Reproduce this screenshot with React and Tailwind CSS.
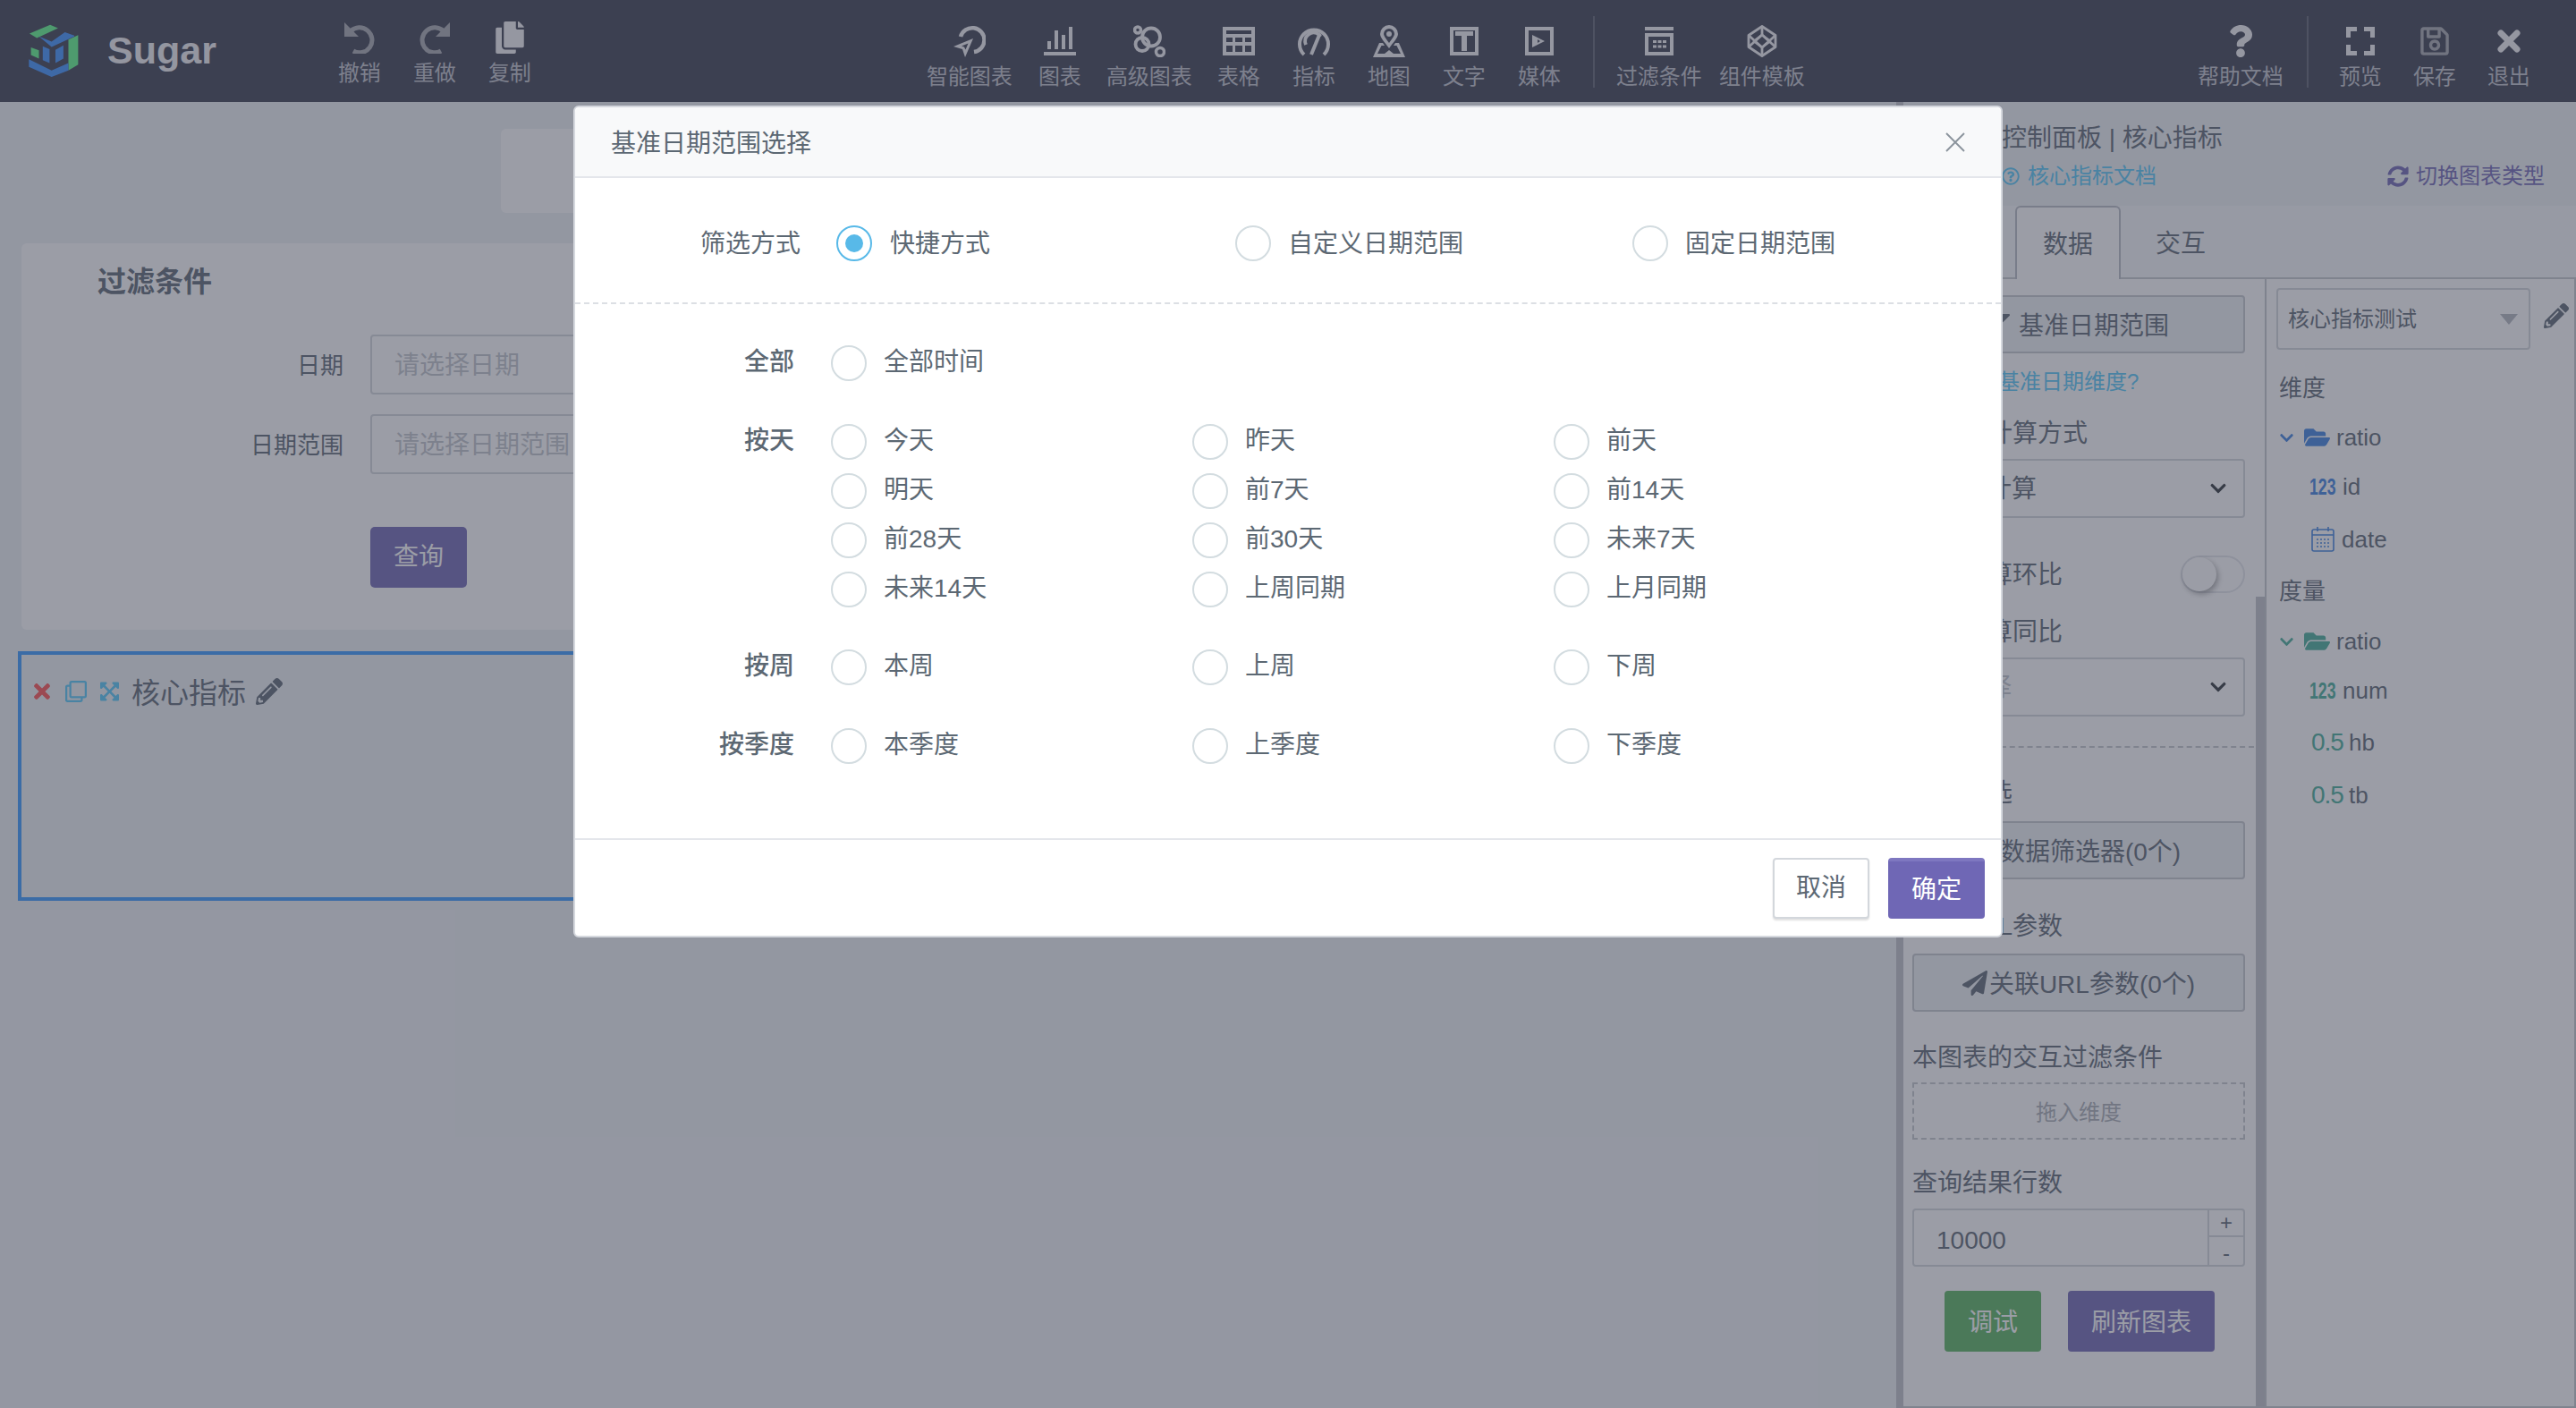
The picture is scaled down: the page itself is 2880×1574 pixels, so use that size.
import React from 'react';
import {
  FaChevronDown,
  FaCopy,
  FaExpandArrowsAlt,
  FaFilter,
  FaFolderOpen,
  FaPaperPlane,
  FaPencilAlt,
  FaQuestion,
  FaRegClone,
  FaRegQuestionCircle,
  FaRegSave,
  FaSyncAlt,
  FaTimes,
} from 'react-icons/fa';

const Svg = ({ children, className = '' }) => (
  <svg viewBox="0 0 36 36" className={`w-[36px] h-[36px] ${className}`} fill="currentColor">
    {children}
  </svg>
);

const UndoIcon = ({ className = '' }) => (
  <Svg className={className}>
    <path d="M1 1v16h16z" />
    <path d="M8 11a14 14 0 1 1 3 22" fill="none" stroke="currentColor" strokeWidth="5" />
  </Svg>
);

const SmartIcon = () => (
  <Svg>
    <path d="M8 13a13.5 13.500 0 1 1 15 17" fill="none" stroke="currentColor" strokeWidth="4.500" />
    <path d="M0 24l22-9-9 21-3-9zM9 23.500l3 1 1.500 3 3-7z" fillRule="evenodd" />
  </Svg>
);

const BarsIcon = () => (
  <Svg>
    <path d="M4 18h4v9H4zM12 6h4v21h-4zM20 11h4v16h-4zM28 2h4v25h-4zM0 30h36v4H0z" />
  </Svg>
);

const BubbleIcon = () => (
  <Svg>
    <g fill="none" stroke="currentColor">
      <circle cx="5" cy="5.500" r="3.500" strokeWidth="3.500" />
      <circle cx="20" cy="13.500" r="10" strokeWidth="3.800" />
      <circle cx="10" cy="21.500" r="7.500" strokeWidth="3.800" />
      <circle cx="30" cy="30" r="4.500" strokeWidth="3.500" />
    </g>
  </Svg>
);

const TableIcon = () => (
  <Svg>
    <path
      fillRule="evenodd"
      d="M0 2h36v32H0zM4 6v4h28V6zM4 14v5h7v-5zM14 14v5h8v-5zM25 14v5h7v-5zM4 23v7h7v-7zM14 23v7h8v-7zM25 23v7h7v-7z"
    />
  </Svg>
);

const GaugeIcon = () => (
  <Svg>
    <g fill="none" stroke="currentColor" strokeWidth="4">
      <path d="M7 33a16 16 0 1 1 22 0" />
      <path d="M9 22a9.500 9.500 0 0 1 15-11l-9 22" />
      <path d="M24 11l1 2" />
    </g>
  </Svg>
);

const MapIcon = () => (
  <Svg>
    <path
      fillRule="evenodd"
      d="M18 0a10 10 0 0 1 10 10c0 4-5 9-10 16C13 19 8 14 8 10A10 10 0 0 1 18 0zm0 4a6 6 0 0 0-6 6c0 2 3 6 6 10 3-4 6-8 6-10a6 6 0 0 0-6-6zm0 3a3 3 0 1 1 0 6 3 3 0 0 1 0-6z"
    />
    <path d="M7 20h4l2 3H9.500L5 32h8l5-4 5 4h8l-4.500-9H23l2-3h4l7 16H0z" />
  </Svg>
);

const TextIcon = () => (
  <Svg>
    <path fillRule="evenodd" d="M2 2h32v32H2zM6 6v24h24V6z" />
    <path d="M8 7h20v5h-7v17h-6V12H8z" />
  </Svg>
);

const MediaIcon = () => (
  <Svg>
    <path fillRule="evenodd" d="M2 2h32v32H2zM6 6v24h24V6z" />
    <path fillRule="evenodd" d="M10 11l14 7-14 7zM16 16v4l3-2z" />
  </Svg>
);

const FilterBoxIcon = () => (
  <Svg>
    <path d="M2 2h32v4H2z" />
    <path fillRule="evenodd" d="M2 9h32v25H2zM6 13v17h24V13z" />
    <path d="M11 17h4v3h-4zM16.500 17h4v3h-4zM22 17h4v3h-4zM11 22.500h4v3h-4zM16.500 22.500h4v3h-4zM22 22.500h4v3h-4z" />
  </Svg>
);

const TemplateIcon = () => (
  <Svg>
    <g fill="none" stroke="currentColor" strokeWidth="2.800" strokeLinejoin="round">
      <path d="M18 1.500l15 10v13l-15 10-15-10v-13z" />
      <path d="M18 11l9 7-9 7-9-7z" />
      <path d="M18 1.500V11M18 25v9.500M3 11.500l15 13.500 15-13.500M3 24.500l15-13.500 15 13.500" />
    </g>
  </Svg>
);

const PreviewIcon = () => (
  <Svg>
    <path d="M2 2h12v5H7v7H2zM22 2h12v12h-5V7h-7zM2 22h5v7h7v5H2zM29 22h5v12H22v-5h7z" />
  </Svg>
);

const CloseIcon = () => (
  <Svg>
    <path d="M9 9l18 18M27 9L9 27" fill="none" stroke="currentColor" strokeWidth="7" strokeLinecap="round" />
  </Svg>
);

const CalendarIcon = ({ className = '' }) => (
  <svg viewBox="0 0 26 28" className={`w-[26px] h-[28px] ${className}`} fill="none" stroke="currentColor" strokeWidth="1.600">
    <rect x="1" y="3" width="24" height="24" rx="2" />
    <path d="M1 9h24M7 0v5M19 0v5" />
    <path d="M6 14h14M6 18h14M6 22h14" strokeDasharray="2 2" />
  </svg>
);

const SugarLogo = () => (
  <svg viewBox="38 33 168 182" className="w-[56px] h-[60px] shrink-0">
    <path fill="#5ff88b" d="M40 65l70-30 27 12-72 33zM172 85l33-15v100l-33 20zM45 112l27 10v28l-27-12z" />
    <path
      fill="#3e92ff"
      d="M72 75l43 17 45-32 32 12v3l-77 35zM38 152l77 38 57-25v25l-57 22-77-34zM85 108l23 10v47l-23-10zM128 120l27-15v45l-27 15z"
    />
  </svg>
);

const Tool = ({ label, icon, className = '', gap = 'mt-[10px]', tone = 'text-[#f2f2f5]' }) => (
  <div className={`flex flex-col items-center ${className}`}>
    <div className={`h-[36px] flex items-center justify-center ${tone}`}>{icon}</div>
    <span className={`${gap} text-[24px] leading-[24px] text-[#c0c2ca] whitespace-nowrap`}>{label}</span>
  </div>
);

const CHART_TOOLS = [
  { label: '智能图表', icon: <SmartIcon />, ml: '' },
  { label: '图表', icon: <BarsIcon />, ml: 'ml-[29px]' },
  { label: '高级图表', icon: <BubbleIcon />, ml: 'ml-[28px]' },
  { label: '表格', icon: <TableIcon />, ml: 'ml-[28px]' },
  { label: '指标', icon: <GaugeIcon />, ml: 'ml-[36px]' },
  { label: '地图', icon: <MapIcon />, ml: 'ml-[36px]' },
  { label: '文字', icon: <TextIcon />, ml: 'ml-[36px]' },
  { label: '媒体', icon: <MediaIcon />, ml: 'ml-[36px]' },
];

const Header = () => (
  <header className="h-[114px] shrink-0 bg-[#3a3d4f] flex items-start pl-[32px]">
    <div className="mt-[27px]">
      <SugarLogo />
    </div>
    <span className="ml-[32px] mt-[35px] text-[43px] leading-[42px] font-bold text-[#f0f0f3]">Sugar</span>

    <div className="ml-[136px] mt-[24px] flex items-start">
      <Tool label="撤销" tone="text-[#a8aab0]" icon={<UndoIcon />} />
      <Tool
        label="重做"
        tone="text-[#a8aab0]"
        className="ml-[36px]"
        icon={<UndoIcon className="-scale-x-100" />}
      />
      <Tool label="复制" className="ml-[36px]" icon={<FaCopy className="w-[32px] h-[36px]" />} />
    </div>

    <div className="ml-[442px] mt-[28px] flex items-start">
      {CHART_TOOLS.map((t) => (
        <Tool key={t.label} label={t.label} icon={t.icon} className={t.ml} />
      ))}
      <div className="ml-[36px] -mt-[10px] w-[2px] h-[80px] bg-[#5f6272]" />
      <Tool label="过滤条件" icon={<FilterBoxIcon />} className="ml-[24px]" />
      <Tool label="组件模板" icon={<TemplateIcon />} className="ml-[19px]" />
    </div>

    <div className="ml-[439px] mt-[28px] flex items-start">
      <Tool label="帮助文档" icon={<FaQuestion className="w-[28px] h-[36px]" />} />
      <div className="ml-[26px] -mt-[10px] w-[2px] h-[80px] bg-[#5f6272]" />
      <Tool label="预览" icon={<PreviewIcon />} className="ml-[34px]" />
      <Tool
        label="保存"
        tone="text-[#a8aab0]"
        icon={<FaRegSave className="w-[32px] h-[36px]" />}
        className="ml-[35px]"
      />
      <Tool label="退出" icon={<CloseIcon />} className="ml-[35px]" />
    </div>
  </header>
);

const FormRow = ({ label, placeholder, className = '' }) => (
  <div className={`flex items-center ${className}`}>
    <label className="w-[360px] pt-[2px] text-right text-[26px] leading-[28px] text-[#5c6873]">{label}</label>
    <input
      readOnly
      placeholder={placeholder}
      className="ml-[30px] w-[460px] h-[67px] pl-[25px] pr-[10px] pt-[3px] bg-white rounded-[4px] border-2 border-[#d4d7db] text-[28px] placeholder:text-[#c0c4ca]"
    />
  </div>
);

const Canvas = () => (
  <main className="w-[2120px] shrink-0 flex flex-col pt-[30px]">
    <div className="ml-[560px] w-[1200px] h-[94px] bg-white rounded-[6px]" />

    <section className="ml-[24px] mt-[34px] w-[2072px] h-[432px] bg-white rounded-[6px]">
      <h2 className="pl-[85px] pt-[27px] text-[32px] leading-[32px] font-bold text-[#5c6873]">过滤条件</h2>
      <FormRow label="日期" placeholder="请选择日期" className="mt-[43px]" />
      <FormRow label="日期范围" placeholder="请选择日期范围" className="mt-[22px]" />
      <button className="block ml-[390px] mt-[59px] w-[108px] h-[68px] rounded-[5px] bg-[#6f67b5] text-white text-[28px]">
        查询
      </button>
    </section>

    <section className="ml-[20px] mt-[24px] w-[2080px] h-[279px] border-4 border-[#3898ff] pl-[12px] pt-[20px]">
      <div className="flex items-center h-[42px]">
        <FaTimes className="w-[22px] h-[26px] text-[#ff5050]" />
        <FaRegClone className="ml-[15px] w-[24px] h-[24px] text-[#55c8f8]" />
        <FaExpandArrowsAlt className="ml-[15px] w-[21px] h-[24px] text-[#55c8f8]" />
        <span className="ml-[14px] pt-[3px] text-[32px] leading-[42px] text-[#5c6873]">核心指标</span>
        <FaPencilAlt className="ml-[11px] w-[30px] h-[30px] text-[#5c6873]" />
      </div>
    </section>
  </main>
);

const FieldLabel = ({ children, className = '' }) => (
  <div className={`h-[28px] pt-[2px] text-[28px] leading-[28px] text-[#5c6873] whitespace-nowrap ${className}`}>
    {children}
  </div>
);

const GrayButton = ({ icon, children, className = '' }) => (
  <div
    className={`h-[65px] flex items-center justify-center gap-[2px] bg-[#eff2f5] border-2 border-[#c4c8ce] rounded-[4px] text-[28px] text-[#5c6873] ${className}`}
  >
    {icon}
    <span className="pt-[5px]">{children}</span>
  </div>
);

const SelectBox = ({ children, muted, className = 'mt-[14px]' }) => (
  <div className={`h-[66px] flex items-center justify-between pl-[25px] pr-[18px] border-2 border-[#d4d7db] rounded-[4px] ${className}`}>
    <span className={`pt-[2px] text-[28px] leading-[28px] ${muted ? 'text-[#c0c4ca]' : 'text-[#5c6873]'}`}>{children}</span>
    <FaChevronDown className="w-[20px] h-[20px] text-[#2f353a]" />
  </div>
);

const QueryPanel = () => (
  <div className="relative w-[406px] shrink-0 bg-white border-r-2 border-[#c4c8ce] pl-[10px] pr-[22px] flex flex-col">
    <div className="absolute right-0 top-[355px] bottom-0 w-[10px] bg-[#c0c3c9]" />
    <GrayButton className="mt-[18px] gap-[10px]" icon={<FaFilter className="w-[24px] h-[24px]" />}>
      基准日期范围
    </GrayButton>
    <div className="mt-[20px] pl-[24px] h-[24px] text-[24px] leading-[24px] text-[#55c8f8]">什么是基准日期维度?</div>
    <FieldLabel className="mt-[30px]">同环比计算方式</FieldLabel>
    <SelectBox className="mt-[16px]">正常计算</SelectBox>
    <div className="mt-[42px] h-[42px] flex items-center justify-between">
      <FieldLabel className="-mt-[2px]">是否计算环比</FieldLabel>
      <div className="w-[72px] h-[42px] rounded-full border-2 border-[#e4e6eb] bg-white">
        <div className="w-[38px] h-[38px] rounded-full bg-white shadow-[2px_3px_6px_rgba(0,0,0,0.35)]" />
      </div>
    </div>
    <FieldLabel className="mt-[28px]">是否计算同比</FieldLabel>
    <SelectBox muted className="mt-[16px]">
      请选择
    </SelectBox>
    <div className="mt-[33px] -ml-[10px] mr-[-10px] border-t-2 border-dashed border-[#c4c8ce]" />
    <FieldLabel className="mt-[35px]">数据筛选</FieldLabel>
    <GrayButton className="mt-[19px]" icon={<FaFilter className="w-[24px] h-[24px]" />}>
      数据筛选器(0个)
    </GrayButton>
    <FieldLabel className="mt-[37px]">关联URL参数</FieldLabel>
    <GrayButton className="mt-[18px] h-[64px]" icon={<FaPaperPlane className="w-[28px] h-[28px]" />}>
      关联URL参数(0个)
    </GrayButton>
    <FieldLabel className="mt-[36px]">本图表的交互过滤条件</FieldLabel>
    <div className="mt-[15px] h-[64px] pt-[4px] flex items-center justify-center border-2 border-dashed border-[#c4c8ce] text-[24px] text-[#a9aeb5]">
      拖入维度
    </div>
    <FieldLabel className="mt-[33px]">查询结果行数</FieldLabel>
    <div className="mt-[16px] h-[65px] flex border-2 border-[#d4d7db] rounded-[4px]">
      <div className="flex-1 flex items-center pl-[25px] pt-[6px] text-[28px] text-[#5c6873]">10000</div>
      <div className="w-[40px] border-l-2 border-[#d4d7db] flex flex-col text-[#5c6873] text-[24px]">
        <span className="h-[30px] flex items-center justify-center border-b-2 border-[#d4d7db]">+</span>
        <span className="flex-1 flex items-center justify-center">-</span>
      </div>
    </div>
    <div className="mt-[27px] ml-[36px] flex gap-[30px] text-white text-[28px]">
      <button className="w-[108px] h-[68px] pt-[4px] rounded-[4px] bg-[#58b45e]">调试</button>
      <button className="w-[164px] h-[68px] pt-[4px] rounded-[4px] bg-[#6f67b5]">刷新图表</button>
    </div>
  </div>
);

const FolderRow = ({ tone, className }) => (
  <div className={`h-[26px] flex items-center ${tone} ${className}`}>
    <FaChevronDown className="w-[17px] h-[17px]" />
    <FaFolderOpen className="ml-[11px] w-[29px] h-[26px]" />
    <span className="ml-[7px] text-[26px] leading-[26px] text-[#5c6873]">ratio</span>
  </div>
);

const FIELDS_DIM = [
  { name: 'id', icon: '123', mt: 'mt-[29px]' },
  { name: 'date', calendar: true, mt: 'mt-[33px]' },
];

const FIELDS_MEASURE = [
  { name: 'num', icon: '123', mt: 'mt-[29px]' },
  { name: 'hb', icon: '0.5', mt: 'mt-[32px]' },
  { name: 'tb', icon: '0.5', mt: 'mt-[33px]' },
];

const FieldRow = ({ field, tone }) => (
  <div className={`h-[26px] pl-[34px] flex items-center ${field.mt}`}>
    {field.calendar ? (
      <CalendarIcon className={`ml-[2px] shrink-0 ${tone}`} />
    ) : field.icon === '123' ? (
      <span className={`w-[29px] shrink-0 origin-left scale-x-[0.68] text-[26px] leading-[26px] font-bold ${tone}`}>
        123
      </span>
    ) : (
      <span className={`ml-[2px] w-[34px] shrink-0 text-[28px] leading-[26px] tracking-[-1px] ${tone}`}>0.5</span>
    )}
    <span className="ml-[8px] text-[26px] leading-[26px] text-[#5c6873]">{field.name}</span>
  </div>
);

const FieldsPanel = () => (
  <div className="flex-1 bg-white border-r-2 border-[#c4c8ce] pl-[14px]">
    <div className="mt-[10px] -ml-[3px] flex items-center">
      <div className="w-[284px] h-[69px] flex items-center justify-between pl-[11px] pr-[12px] border-2 border-[#d4d7db] rounded-[4px]">
        <span className="text-[24px] leading-[24px] text-[#5c6873]">核心指标测试</span>
        <span className="w-0 h-0 border-x-[10px] border-x-transparent border-t-[12px] border-t-[#b4b8bf]" />
      </div>
      <FaPencilAlt className="ml-[15px] -mt-[8px] w-[28px] h-[28px] text-[#5c6873]" />
    </div>
    <div className="mt-[28px] h-[26px] pt-[2px] text-[26px] leading-[26px] text-[#5c6873]">维度</div>
    <FolderRow tone="text-[#3e82e0]" className="mt-[31px]" />
    {FIELDS_DIM.map((f) => (
      <FieldRow key={f.name} field={f} tone="text-[#3e82e0]" />
    ))}
    <div className="mt-[32px] text-[26px] leading-[26px] text-[#5c6873]">度量</div>
    <FolderRow tone="text-[#46ad98]" className="mt-[30px]" />
    {FIELDS_MEASURE.map((f) => (
      <FieldRow key={f.name} field={f} tone="text-[#46ad98]" />
    ))}
  </div>
);

const Sidebar = () => (
  <aside className="flex-1 flex flex-col min-w-0 border-l-8 border-[#c0c3c9]">
    <div className="h-[116px] shrink-0 pt-[27px]">
      <div className="pl-[110px] text-[28px] leading-[28px] text-[#5c6873]">控制面板 | 核心指标</div>
      <div className="mt-[16px] pl-[110px] pr-[35px] flex items-center justify-between text-[24px] leading-[24px]">
        <div className="flex items-center gap-[9px] text-[#55c8f8]">
          <FaRegQuestionCircle className="w-[20px] h-[20px]" />
          核心指标文档
        </div>
        <div className="flex items-center gap-[8px] text-[#6f67b5]">
          <FaSyncAlt className="w-[24px] h-[24px]" />
          切换图表类型
        </div>
      </div>
    </div>
    <div className="h-[82px] shrink-0 pl-[125px] flex bg-[#f7f8fa] border-b-2 border-[#c4c8ce]">
      <div className="w-[118px] h-[82px] pt-[4px] flex items-center justify-center bg-white border-2 border-b-0 border-[#b8bcc4] rounded-t-[6px] text-[28px] text-[#5c6873]">
        数据
      </div>
      <div className="w-[134px] pt-[6px] flex items-center justify-center text-[28px] text-[#5c6873]">交互</div>
    </div>
    <div className="flex-1 flex min-h-0 border-b-2 border-[#c4c8ce]">
      <QueryPanel />
      <FieldsPanel />
    </div>
  </aside>
);

const Radio = ({ checked }) => (
  <span
    className={`w-[40px] h-[40px] shrink-0 rounded-full border-2 bg-white flex items-center justify-center ${
      checked ? 'border-[#58b9e8]' : 'border-[#d3dce0]'
    }`}
  >
    {checked && <span className="w-[20px] h-[20px] rounded-full bg-[#58b9e8]" />}
  </span>
);

const METHODS = [
  { label: '快捷方式', checked: true, gap: 'gap-[20px] w-[446px]' },
  { label: '自定义日期范围', gap: 'gap-[19px] w-[444px]' },
  { label: '固定日期范围', gap: 'gap-[19px]' },
];

const RANGE_GROUPS = [
  { title: '全部', mt: 'mt-[46px]', items: ['全部时间'] },
  {
    title: '按天',
    mt: 'mt-[48px]',
    items: ['今天', '昨天', '前天', '明天', '前7天', '前14天', '前28天', '前30天', '未来7天', '未来14天', '上周同期', '上月同期'],
  },
  { title: '按周', mt: 'mt-[47px]', items: ['本周', '上周', '下周'] },
  { title: '按季度', mt: 'mt-[48px]', items: ['本季度', '上季度', '下季度'] },
];

const DateRangeModal = () => (
  <div className="absolute inset-0 bg-[#404355]/52 flex justify-center items-start">
    <div className="mt-[118px] w-[1598px] h-[930px] flex flex-col bg-white rounded-[6px] border-2 border-[#d5d8de] text-[#5c6873]">
      <div className="h-[79px] shrink-0 flex items-center justify-between pl-[40px] pr-[36px] bg-[#f8f9fa] border-b-2 border-[#e4e6eb] rounded-t-[6px]">
        <h3 className="pt-[4px] text-[28px] leading-[28px] font-normal">基准日期范围选择</h3>
        <svg viewBox="0 0 24 24" className="w-[30px] h-[30px]" fill="none" stroke="#8b949c" strokeWidth="1.500">
          <path d="M4 4l16 16M20 4L4 20" />
        </svg>
      </div>

      <div className="h-[141px] shrink-0 flex items-center pt-[6px] pl-[140px] border-b-2 border-dashed border-[#dcdfe4] text-[28px] leading-[28px]">
        <span className="w-[111px] shrink-0 pt-[3px] whitespace-nowrap">筛选方式</span>
        <div className="ml-[41px] flex">
          {METHODS.map((m) => (
            <label key={m.label} className={`flex items-center shrink-0 whitespace-nowrap ${m.gap}`}>
              <Radio checked={m.checked} />
              <span className="pt-[3px]">{m.label}</span>
            </label>
          ))}
        </div>
      </div>

      <div className="flex-1 text-[28px] leading-[28px]">
        {RANGE_GROUPS.map((g) => (
          <div key={g.title} className={`flex items-start ${g.mt}`}>
            <span className="w-[245px] h-[38px] flex items-center justify-end font-medium">{g.title}</span>
            <div className="ml-[41px] grid grid-cols-[404px_404px_404px] gap-y-[15px]">
              {g.items.map((item) => (
                <label key={item} className="h-[40px] flex items-center gap-[19px]">
                  <Radio />
                  <span className="pb-[2px]">{item}</span>
                </label>
              ))}
            </div>
          </div>
        ))}
      </div>

      <div className="h-[109px] shrink-0 flex items-center justify-end gap-[21px] pr-[18px] border-t-2 border-[#e4e6eb] text-[28px]">
        <button className="w-[108px] h-[68px] rounded-[4px] bg-white border-2 border-[#d3d7dc] shadow-[0_2px_2px_rgba(0,0,0,0.12)]">
          取消
        </button>
        <button className="w-[108px] h-[68px] rounded-[4px] bg-[#6f67b5] border-t-4 border-[#7e77c0] text-white">
          确定
        </button>
      </div>
    </div>
  </div>
);

export default function App() {
  return (
    <div className="relative w-[2880px] h-[1574px] overflow-hidden flex flex-col bg-[#eff2f5] [font-family:'Liberation_Sans','Noto_Sans_CJK_SC',sans-serif]">
      <Header />
      <div className="flex-1 flex min-h-0">
        <Canvas />
        <Sidebar />
      </div>
      <DateRangeModal />
    </div>
  );
}
